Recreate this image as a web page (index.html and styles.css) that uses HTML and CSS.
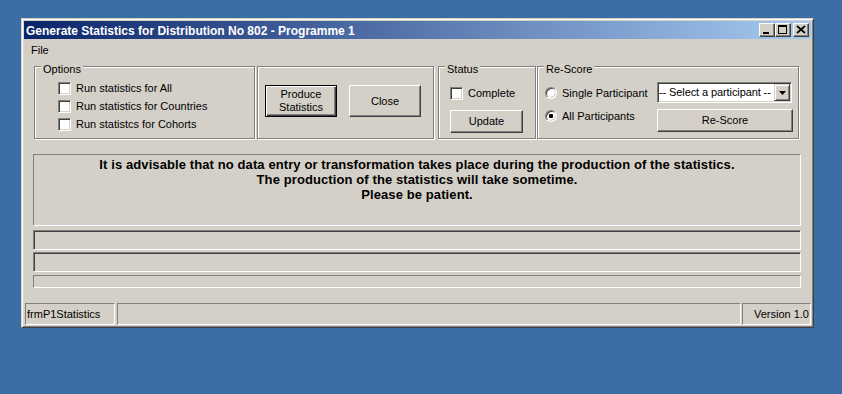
FILE: index.html
```html
<!DOCTYPE html>
<html lang="en">
<head>
  <meta charset="UTF-8">
  <title>Generate Statistics for Distribution No 802 - Programme 1</title>
  <link rel="stylesheet" href="styles.css">
</head>
<body>
  <div class="window">
    <div class="titlebar">
      <span class="title">Generate Statistics for Distribution No 802 - Programme 1</span>
      <div class="caption-buttons">
        <span class="cap-btn">
          <svg width="14" height="12" viewBox="0 0 14 12"><rect x="3" y="8" width="6" height="2" fill="#000"/></svg>
        </span>
        <span class="cap-btn">
          <svg width="14" height="12" viewBox="0 0 14 12"><rect x="2.5" y="1.5" width="8" height="8" fill="none" stroke="#000"/><rect x="2" y="1" width="9" height="2" fill="#000"/></svg>
        </span>
        <span class="cap-btn cap-close">
          <svg width="14" height="12" viewBox="0 0 14 12"><path d="M3 2 L11 9 M11 2 L3 9" stroke="#000" stroke-width="1.7" fill="none"/></svg>
        </span>
      </div>
    </div>

    <div class="menubar"><span class="menu-item">File</span></div>

    <div class="client">
      <div class="group-row">
        <div class="group options">
          <span class="group-label">Options</span>
          <div class="check-row"><span class="checkbox"></span>Run statistics for All</div>
          <div class="check-row"><span class="checkbox"></span>Run statistics for Countries</div>
          <div class="check-row"><span class="checkbox"></span>Run statistcs for Cohorts</div>
        </div>

        <div class="group actions">
          <button class="btn btn-default btn-big">Produce<br>Statistics</button>
          <button class="btn btn-big">Close</button>
        </div>

        <div class="group status">
          <span class="group-label">Status</span>
          <div class="check-row single"><span class="checkbox"></span>Complete</div>
          <button class="btn btn-update">Update</button>
        </div>

        <div class="group rescore">
          <span class="group-label">Re-Score</span>
          <div class="radio-col">
            <div class="radio-row"><span class="radio"></span>Single Participant</div>
            <div class="radio-row second"><span class="radio checked"></span>All Participants</div>
          </div>
          <div class="combo-col">
            <div class="combo">
              <span class="combo-text">-- Select a participant --</span>
              <span class="combo-drop">
                <svg width="7" height="4" viewBox="0 0 7 4"><polygon points="0,0 7,0 3.5,4" fill="#000"/></svg>
              </span>
            </div>
            <button class="btn btn-rescore">Re-Score</button>
          </div>
        </div>
      </div>

      <div class="message">
        It is advisable that no data entry or transformation takes place during the production of the statistics.<br>
        The production of the statistics will take sometime.<br>
        Please be patient.
      </div>

      <div class="bar"></div>
      <div class="bar bar-second"></div>
      <div class="bar bar-thin"></div>
    </div>

    <div class="statusbar">
      <div class="panel panel-name">frmP1Statistics</div>
      <div class="panel panel-fill"></div>
      <div class="panel panel-version">Version 1.0</div>
    </div>
  </div>
</body>
</html>
```

FILE: styles.css
```css
body {
  margin: 0;
  background: #3a6ea5;
  font-family: "Liberation Sans", Arial, sans-serif;
  font-size: 11px;
  color: #000;
}

.window {
  margin: 18px 0 0 21px;
  width: 793px;
  height: 310px;
  box-sizing: border-box;
  background: #d4d0c8;
  border: 1px solid;
  border-color: #d4d0c8 #404040 #404040 #d4d0c8;
  box-shadow: inset 1px 1px #fff, inset -1px -1px #808080;
  padding: 2px;
  display: flex;
  flex-direction: column;
}

/* title bar */
.titlebar {
  height: 18px;
  flex-shrink: 0;
  display: flex;
  background: linear-gradient(to right, #0a246a, #a6caf0);
  color: #fff;
  font-weight: bold;
  font-size: 12px;
}

.title {
  flex: 1;
  padding-left: 2px;
  margin-top: 1px;
  line-height: 19px;
  white-space: nowrap;
}

.caption-buttons {
  display: flex;
  margin: 2px 2px 0 0;
}

.cap-btn {
  width: 16px;
  height: 14px;
  box-sizing: border-box;
  background: #d4d0c8;
  border: 1px solid;
  border-color: #fff #404040 #404040 #fff;
  box-shadow: inset -1px -1px #808080;
}

.cap-btn svg {
  display: block;
}

.cap-close {
  margin-left: 2px;
}

/* menu */
.menubar {
  height: 21px;
  flex-shrink: 0;
  box-sizing: border-box;
  padding: 2px 0 0 7px;
  line-height: 19px;
}

.client {
  padding-left: 9px;
}

/* group boxes */
.group-row {
  display: flex;
  margin-top: 6px;
  height: 73px;
}

.group {
  position: relative;
  box-sizing: border-box;
  height: 73px;
  border: 1px solid #808080;
  box-shadow: inset 1px 1px #fff, 1px 1px #fff;
}

.group-label {
  position: absolute;
  top: -4px;
  left: 6px;
  padding: 0 2px;
  background: #d4d0c8;
  line-height: 13px;
}

.options {
  width: 221px;
  margin-left: 1px;
  padding: 15px 0 0 23px;
}

.actions {
  width: 177px;
  margin-left: 2px;
  padding: 18px 0 0 7px;
  display: flex;
  align-items: flex-start;
  gap: 12px;
}

.status {
  width: 98px;
  margin-left: 4px;
  padding: 20px 0 0 11px;
}

.rescore {
  width: 262px;
  margin-left: 1px;
  padding-left: 7px;
  display: flex;
  align-items: flex-start;
}

/* checkboxes and radios */
.check-row {
  display: flex;
  align-items: flex-start;
  gap: 5px;
  height: 18px;
  line-height: 13px;
  white-space: nowrap;
}

.check-row.single {
  height: 13px;
}

.checkbox {
  width: 13px;
  height: 13px;
  flex-shrink: 0;
  box-sizing: border-box;
  background: #fff;
  border: 1px solid;
  border-color: #808080 #fff #fff #808080;
  box-shadow: inset 1px 1px #404040, inset -1px -1px #d4d0c8;
}

.radio-col {
  width: 112px;
  padding-top: 20px;
}

.radio-row {
  display: flex;
  align-items: center;
  gap: 5px;
  height: 12px;
  line-height: 13px;
  white-space: nowrap;
}

.radio-row.second {
  margin-top: 11px;
}

.radio {
  width: 12px;
  height: 12px;
  flex-shrink: 0;
  box-sizing: border-box;
  border-radius: 50%;
  background: #fff;
  border: 1px solid;
  border-color: #808080 #fff #fff #808080;
  box-shadow: inset 1px 1px #404040, inset -1px -1px #d4d0c8;
}

.radio.checked {
  background: radial-gradient(circle, #000 0 2px, #fff 2.5px);
}

/* combo */
.combo-col {
  padding-top: 15px;
}

.combo {
  width: 135px;
  height: 21px;
  box-sizing: border-box;
  display: flex;
  padding: 1px;
  background: #fff;
  border: 1px solid;
  border-color: #808080 #fff #fff #808080;
  box-shadow: inset 1px 1px #404040, inset -1px -1px #d4d0c8;
}

.combo-text {
  flex: 1;
  overflow: hidden;
  line-height: 17px;
  letter-spacing: -0.1px;
  white-space: nowrap;
}

.combo-drop {
  width: 16px;
  flex-shrink: 0;
  box-sizing: border-box;
  display: flex;
  align-items: center;
  justify-content: center;
  background: #d4d0c8;
  border: 1px solid;
  border-color: #d4d0c8 #404040 #404040 #d4d0c8;
  box-shadow: inset 1px 1px #fff, inset -1px -1px #808080;
}

/* buttons */
.btn {
  font-family: "Liberation Sans", Arial, sans-serif;
  font-size: 11px;
  line-height: 13px;
  color: #000;
  padding: 0;
  box-sizing: border-box;
  background: #d4d0c8;
  border: 1px solid;
  border-color: #fff #404040 #404040 #fff;
  box-shadow: inset -1px -1px #808080;
}

.btn-default {
  border-color: #000;
  box-shadow: inset 1px 1px #fff, inset -1px -1px #404040, inset -2px -2px #808080;
}

.btn-big {
  width: 72px;
  height: 32px;
}

.btn-update {
  display: block;
  margin-top: 10px;
  width: 73px;
  height: 23px;
}

.btn-rescore {
  display: block;
  margin-top: 6px;
  width: 136px;
  height: 23px;
}

/* message + bars */
.message {
  margin-top: 15px;
  width: 768px;
  height: 72px;
  box-sizing: border-box;
  padding-top: 2px;
  border: 1px solid;
  border-color: #808080 #fff #fff #808080;
  text-align: center;
  font-weight: bold;
  font-size: 13px;
  line-height: 15px;
  letter-spacing: 0.1px;
}

.bar {
  width: 768px;
  height: 20px;
  margin-top: 4px;
  box-sizing: border-box;
  border: 1px solid;
  border-color: #808080 #fff #fff #808080;
  box-shadow: inset 1px 1px #404040, inset -1px -1px #d4d0c8;
}

.bar-second {
  margin-top: 2px;
}

.bar-thin {
  margin-top: 3px;
  height: 13px;
  box-shadow: none;
}

/* status bar */
.statusbar {
  margin-top: auto;
  display: flex;
  height: 22px;
  flex-shrink: 0;
}

.panel {
  box-sizing: border-box;
  height: 22px;
  padding: 0 1px;
  line-height: 20px;
  border: 1px solid;
  border-color: #808080 #fff #fff #808080;
  white-space: nowrap;
}

.panel-name {
  width: 90px;
  margin-left: 1px;
}

.panel-fill {
  flex: 1;
  margin-left: 2px;
}

.panel-version {
  width: 69px;
  margin-left: 1px;
  text-align: right;
}
```
